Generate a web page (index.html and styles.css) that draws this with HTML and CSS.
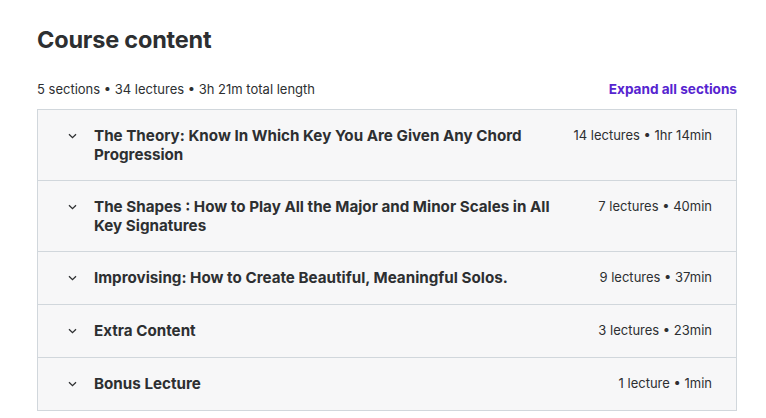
FILE: index.html
```html
<!DOCTYPE html>
<html lang="en">

<head>
    <meta charset="UTF-8">
    <meta name="viewport" content="width=device-width, initial-scale=1.0">
    <title>Course content</title>
    <link rel="stylesheet" href="styles.css">
</head>

<body>

    <div class="course-content">
        <h2 class="heading">Course content</h2>

        <div class="summary">
            <span>5 sections • 34 lectures • 3h 21m total length</span>
            <button class="expand-all">Expand all sections</button>
        </div>

        <div class="sections">
            <div class="section">
                <span class="chevron"><svg width="9" height="6" viewBox="0 0 9 6"><path d="M1 1.2l3.5 3.5 3.5-3.5" fill="none" stroke="currentColor" stroke-width="1.3"/></svg></span>
                <span class="section-title">The Theory: Know In Which Key You Are Given Any Chord Progression</span>
                <span class="section-meta">14 lectures • 1hr 14min</span>
            </div>
            <div class="section">
                <span class="chevron"><svg width="9" height="6" viewBox="0 0 9 6"><path d="M1 1.2l3.5 3.5 3.5-3.5" fill="none" stroke="currentColor" stroke-width="1.3"/></svg></span>
                <span class="section-title">The Shapes : How to Play All the Major and Minor Scales in All Key Signatures</span>
                <span class="section-meta">7 lectures • 40min</span>
            </div>
            <div class="section">
                <span class="chevron"><svg width="9" height="6" viewBox="0 0 9 6"><path d="M1 1.2l3.5 3.5 3.5-3.5" fill="none" stroke="currentColor" stroke-width="1.3"/></svg></span>
                <span class="section-title">Improvising: How to Create Beautiful, Meaningful Solos.</span>
                <span class="section-meta">9 lectures • 37min</span>
            </div>
            <div class="section">
                <span class="chevron"><svg width="9" height="6" viewBox="0 0 9 6"><path d="M1 1.2l3.5 3.5 3.5-3.5" fill="none" stroke="currentColor" stroke-width="1.3"/></svg></span>
                <span class="section-title">Extra Content</span>
                <span class="section-meta">3 lectures • 23min</span>
            </div>
            <div class="section">
                <span class="chevron"><svg width="9" height="6" viewBox="0 0 9 6"><path d="M1 1.2l3.5 3.5 3.5-3.5" fill="none" stroke="currentColor" stroke-width="1.3"/></svg></span>
                <span class="section-title">Bonus Lecture</span>
                <span class="section-meta">1 lecture • 1min</span>
            </div>
        </div>
    </div>

</body>

</html>
```

FILE: styles.css
```css
body {
    font-family: 'Inter', 'Noto Sans', Arial, sans-serif;
    background-color: #ffffff;
    color: #2d2f31;
    margin: 0;
    padding: 0;
}

.course-content {
    width: 700px;
    padding: 23px 0 0 37px;
}

.heading {
    font-size: 23.5px;
    font-weight: 700;
    line-height: 34px;
    margin: 0 0 22px 0;
    letter-spacing: -0.2px;
}

.summary {
    display: flex;
    justify-content: space-between;
    align-items: center;
    font-size: 13px;
    line-height: 20px;
    margin-bottom: 10px;
}

.expand-all {
    background: none;
    border: none;
    padding: 0;
    font-family: inherit;
    font-size: 13.6px;
    font-weight: 700;
    color: #5624d0;
    cursor: pointer;
}

.sections {
    border: 1px solid #d1d7dc;
    border-bottom: none;
}

.section {
    display: flex;
    align-items: flex-start;
    padding: 16px 24px 16px 30px;
    background-color: #f7f7f8;
    border-bottom: 1px solid #d1d7dc;
}

.chevron {
    width: 26px;
    height: 19px;
    display: flex;
    align-items: center;
    color: #2d2f31;
    flex-shrink: 0;
}

.section-title {
    flex: 1;
    font-size: 15.2px;
    font-weight: 700;
    line-height: 19px;
    padding-right: 30px;
}

.section-meta {
    font-size: 13px;
    line-height: 21px;
    margin-top: -1px;
    white-space: nowrap;
}
```
